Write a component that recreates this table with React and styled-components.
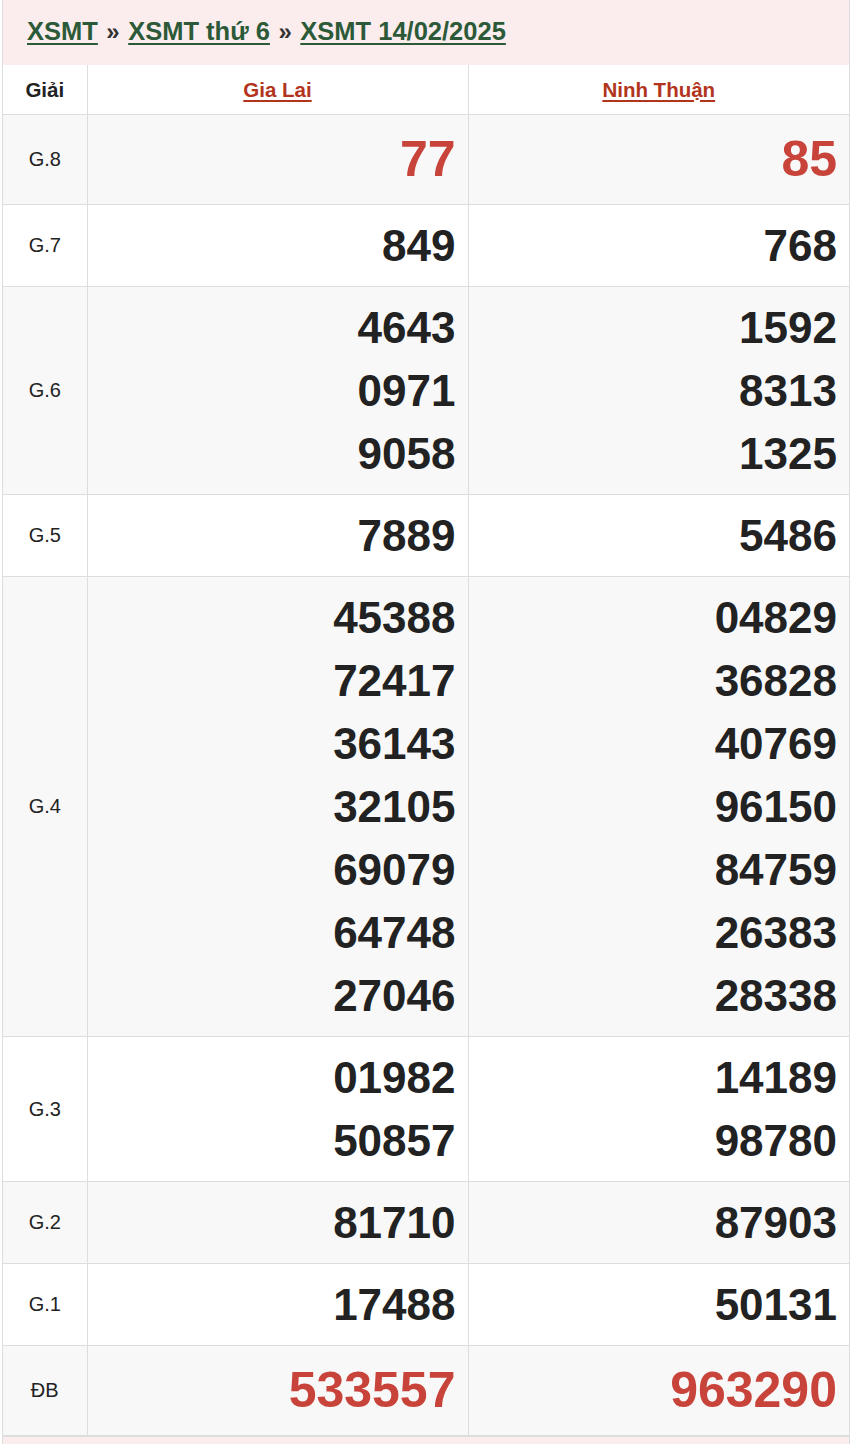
import React from "react";
import styled, { createGlobalStyle } from "styled-components";

const GlobalStyle = createGlobalStyle`
    body {
        margin: 0;
        padding: 0;
        background: #fff;
        font-family: "Liberation Sans", Arial, sans-serif;
    }
`

const Page = styled.div`
    width: 848px;
    margin-left: 2px;
    border-left: 1px solid #ddd;
    border-right: 1px solid #ddd;
    box-sizing: border-box;
`

const Breadcrumb = styled.div`
    height: 65px;
    box-sizing: border-box;
    padding: 17px 0 0 24px;
    background-color: #fbeded;
    font-size: 25.5px;
    font-weight: bold;
    color: #2c5a39;
`

const Crumb = styled.a`
    color: #2c5a39;
    text-decoration: underline;
    text-decoration-thickness: 2px;
    text-underline-offset: 3px;
`

const Sep = styled.span`
    margin: 0 8.5px;
    color: #333;
    font-size: 24px;
`

const Table = styled.table`
    width: 100%;
    border-collapse: collapse;
    table-layout: fixed;
`

const HeadCell = styled.th`
    height: 47px;
    border: 1px solid #ddd;
    border-top: none;
    font-size: 20.5px;
    font-weight: bold;
    color: #222;
    background: #fff;
    &:first-child { border-left: none; }
    &:last-child { border-right: none; }
`

const Province = styled.a`
    color: #b3341d;
    text-decoration: underline;
    text-decoration-thickness: 2px;
    text-underline-offset: 3px;
`

const Row = styled.tr`
    background-color: ${props => props.alt ? '#f8f8f8' : '#fff'};
`

const Label = styled.td`
    border: 1px solid #ddd;
    border-left: none;
    text-align: center;
    font-size: 20px;
    color: #222;
`

const NumCell = styled.td`
    border: 1px solid #ddd;
    padding: 9px 12px 9px 0;
    text-align: right;
    vertical-align: middle;
    &:last-child { border-right: none; }
`

const Num = styled.div`
    font-weight: bold;
    font-size: ${props => props.big ? '50px' : '44px'};
    line-height: ${props => props.big ? '71px' : '63px'};
    color: ${props => props.red ? '#c8433a' : '#222'};
`

const Footer = styled.div`
    height: 9px;
    border-top: 1px solid #ddd;
    background-color: #fbeded;
`

const results = [
    { name: "G.8", big: true, red: true, a: ["77"], b: ["85"] },
    { name: "G.7", a: ["849"], b: ["768"] },
    { name: "G.6", a: ["4643", "0971", "9058"], b: ["1592", "8313", "1325"] },
    { name: "G.5", a: ["7889"], b: ["5486"] },
    { name: "G.4", a: ["45388", "72417", "36143", "32105", "69079", "64748", "27046"], b: ["04829", "36828", "40769", "96150", "84759", "26383", "28338"] },
    { name: "G.3", a: ["01982", "50857"], b: ["14189", "98780"] },
    { name: "G.2", a: ["81710"], b: ["87903"] },
    { name: "G.1", a: ["17488"], b: ["50131"] },
    { name: "ĐB", big: true, red: true, a: ["533557"], b: ["963290"] },
];

const App = () => {
    return (
        <>
            <GlobalStyle />
            <Page>
                <Breadcrumb>
                    <Crumb href="#">XSMT</Crumb>
                    <Sep>»</Sep>
                    <Crumb href="#">XSMT thứ 6</Crumb>
                    <Sep>»</Sep>
                    <Crumb href="#">XSMT 14/02/2025</Crumb>
                </Breadcrumb>
                <Table>
                    <colgroup>
                        <col style={{ width: 84 }} />
                        <col />
                        <col />
                    </colgroup>
                    <thead>
                        <tr>
                            <HeadCell>Giải</HeadCell>
                            <HeadCell><Province href="#">Gia Lai</Province></HeadCell>
                            <HeadCell><Province href="#">Ninh Thuận</Province></HeadCell>
                        </tr>
                    </thead>
                    <tbody>
                        {results.map((r, i) => (
                            <Row key={r.name} alt={i % 2 === 0}>
                                <Label>{r.name}</Label>
                                <NumCell>
                                    {r.a.map(n => <Num key={n} big={r.big} red={r.red}>{n}</Num>)}
                                </NumCell>
                                <NumCell>
                                    {r.b.map(n => <Num key={n} big={r.big} red={r.red}>{n}</Num>)}
                                </NumCell>
                            </Row>
                        ))}
                    </tbody>
                </Table>
                <Footer />
            </Page>
        </>
    )
}

export default App;
